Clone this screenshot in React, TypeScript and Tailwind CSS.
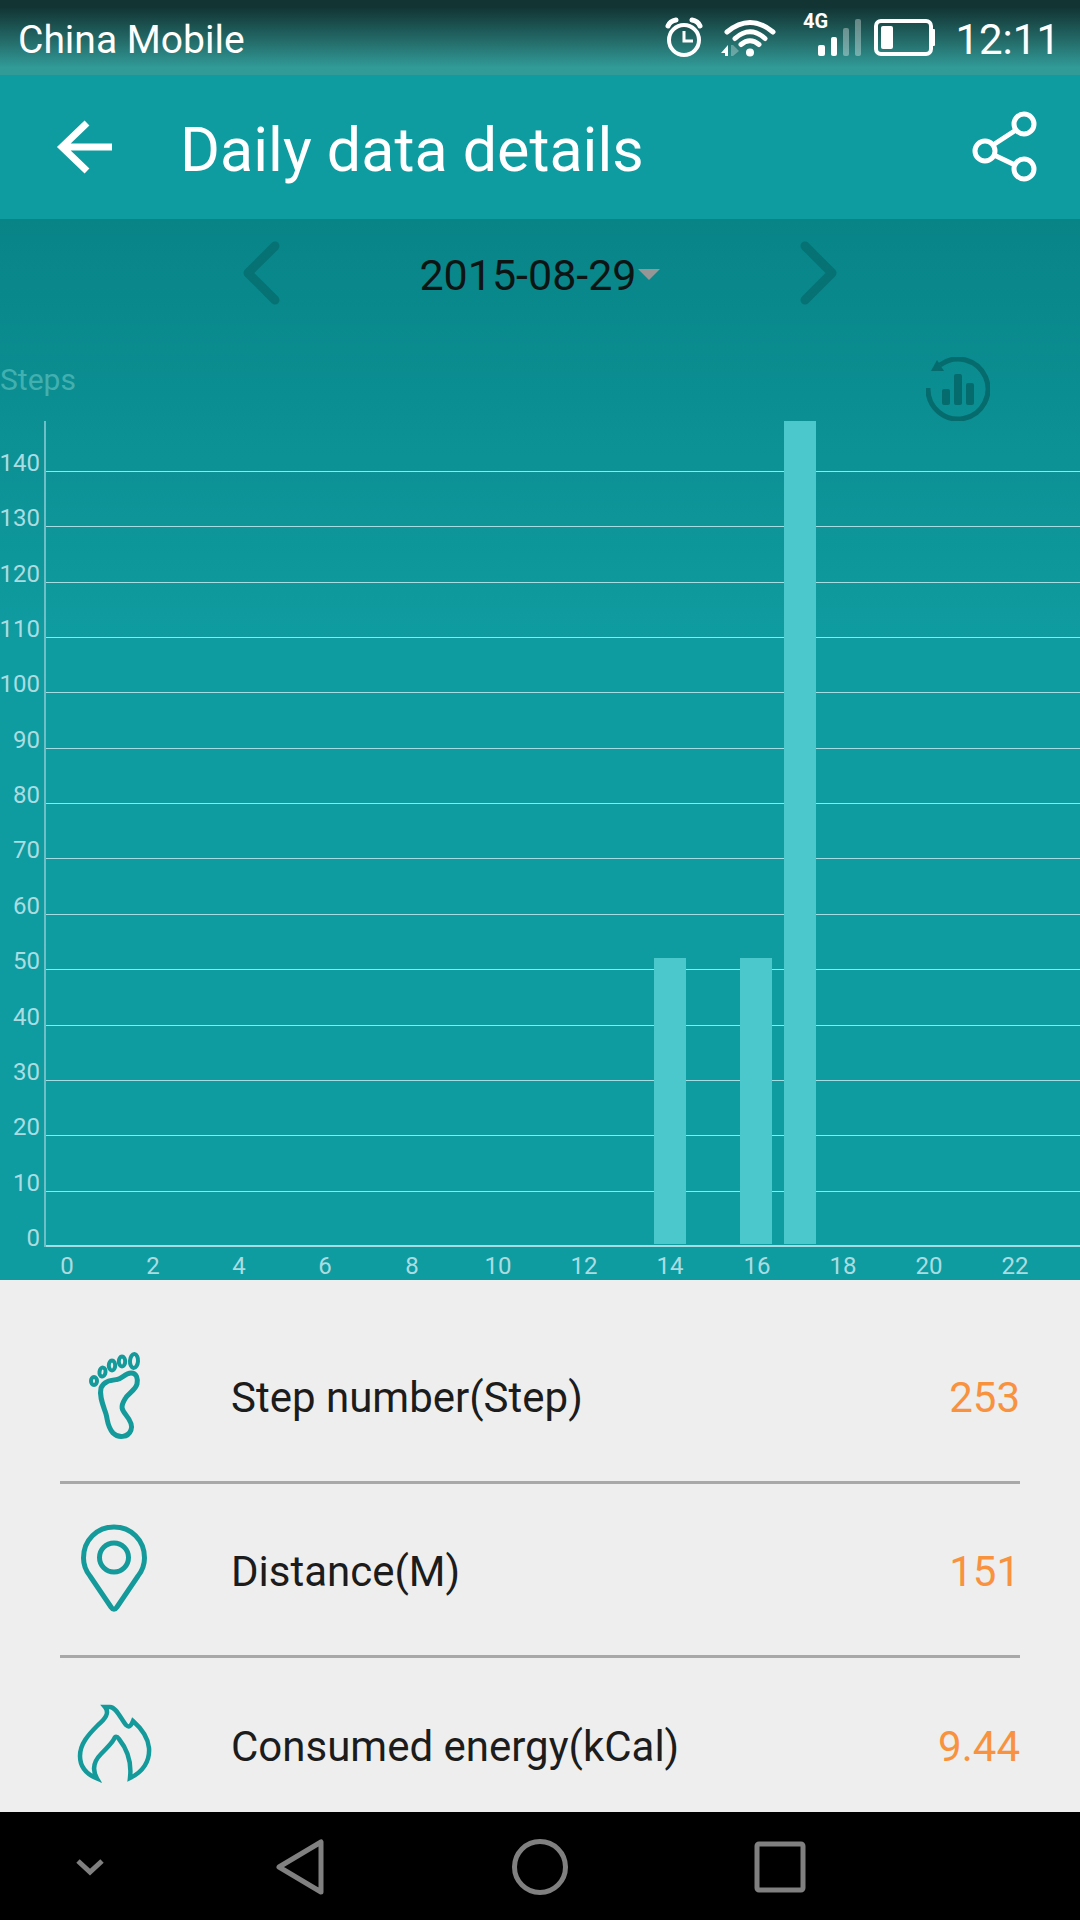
import type { ReactNode } from "react";

const hourlySteps = [
  { hour: 14, steps: 52 },
  { hour: 16, steps: 52 },
  { hour: 17, steps: 149 },
];

const stats = [
  { label: "Step number(Step)", value: "253", icon: <FootIcon /> },
  { label: "Distance(M)", value: "151", icon: <PinIcon /> },
  { label: "Consumed energy(kCal)", value: "9.44", icon: <FlameIcon /> },
];

// Chart geometry, in viewBox units
const CHART_W = 1080;
const CHART_H = 859;
const AXIS_X = 45;
const BASE_Y = 825;
const MAX_STEPS = 149;
const SLOT = (CHART_W - AXIS_X) / 24;

const yOf = (steps: number) => Math.round(BASE_Y - (steps / MAX_STEPS) * BASE_Y);

function FootIcon() {
  return (
    <svg viewBox="0 0 80 100" className="w-20 h-[100px]" fill="none" stroke="#159a9b" strokeWidth="4" aria-hidden="true">
      <ellipse cx="20" cy="35" rx="3" ry="4" />
      <ellipse cx="28.500" cy="26" rx="3" ry="4.500" transform="rotate(8 28 26)" />
      <ellipse cx="38" cy="19.500" rx="3.200" ry="5" />
      <ellipse cx="48" cy="15.500" rx="3.200" ry="5" />
      <ellipse cx="60" cy="15" rx="4" ry="7" transform="rotate(4 60 15)" />
      <path strokeWidth="5" d="M43 33.500C48 33 51 27 57 27C63 27 64 33 63 38C61 45 54 47 51 53C46 61 48 64 52 69C56 74 59 79 57 84C54 92 44 92 39 87C33 80 34 75 32 68C29 59 25 50 27 42C30 35 36 34.500 43 33.500Z" />
    </svg>
  );
}

function PinIcon() {
  return (
    <svg viewBox="0 0 80 100" className="w-20 h-[100px]" fill="none" stroke="#159a9b" strokeWidth="5" aria-hidden="true">
      <path d="M40 7C57 7 70.500 20 70.500 38C70.500 45 68 51 64 56L43 87C41 90 39 90 37 87L16 56C12 51 9.500 45 9.500 38C9.500 20 23 7 40 7Z" />
      <circle cx="40" cy="37.500" r="14.500" />
    </svg>
  );
}

function FlameIcon() {
  return (
    <svg viewBox="0 0 80 100" className="w-20 h-[100px]" fill="none" stroke="#159a9b" strokeWidth="4.500" aria-hidden="true">
      <path d="M31 12C36 18 31 24 24 30C14 40 6 49 6 61C6 71 12 79 23 83.500C17 73 21 65 27 59C33 53 38 48 40 44C41 41 43 41 45 44C53 54 58 66 56 83C69 77 76 66 75 53C74 42 67 33 59 26C57 31 55 33 52 30C47 24 42 12 36 12Z" />
    </svg>
  );
}

function StatusBar() {
  return (
    <div className="flex items-center justify-between h-[75px] pl-[18px] pr-5 pt-1 text-white bg-gradient-to-b from-[#123534] from-10% to-[#319b98] to-90% shrink-0">
      <span className="text-[39px] leading-[64px]">China Mobile</span>
      <div className="flex items-center">
        {/* Alarm */}
        <svg viewBox="0 0 38 46" className="w-[38px] h-[46px]" fill="none" stroke="white" aria-hidden="true">
          <circle cx="19" cy="23" r="15" strokeWidth="4" />
          <path d="M19 14V24H28" strokeWidth="3" />
          <path d="M3 9Q5 4 11 3M35 9Q33 4 27 3" strokeWidth="5" strokeLinecap="round" />
        </svg>
        {/* Wifi */}
        <svg viewBox="0 0 58 46" className="w-[58px] h-[46px] ml-4" fill="none" stroke="white" strokeWidth="5" strokeLinecap="round" aria-hidden="true">
          <path d="M8 15Q31 -4 54 15M16 21.500Q31 8 46 21.500M22 27.500Q31 20 40 27.500" />
          <circle cx="31" cy="35.500" r="4" fill="white" stroke="none" />
          <path d="M9 28V39H6V36H2Z" fill="white" stroke="none" />
          <path d="M12 28V39H14L20 34L14 28Z" fill="white" fillOpacity="0.300" stroke="none" />
        </svg>
        {/* Signal */}
        <svg viewBox="0 0 60 46" className="w-[60px] h-[46px] ml-[26px] overflow-visible" fill="white" aria-hidden="true">
          <text x="0" y="11" fontSize="20" fontWeight="700">4G</text>
          <rect x="15" y="28" width="7" height="11" rx="2" />
          <rect x="28" y="20" width="6" height="19" rx="2" />
          <rect x="40" y="11" width="6" height="28" rx="2" fillOpacity="0.350" />
          <rect x="52" y="2" width="6" height="37" rx="2" fillOpacity="0.350" />
        </svg>
        {/* Battery */}
        <svg viewBox="0 0 62 46" className="w-[62px] h-[46px] ml-[11px]" aria-hidden="true">
          <rect x="2" y="4" width="55" height="33" rx="5" fill="none" stroke="white" strokeWidth="4" />
          <rect x="7" y="9" width="12" height="23" rx="2" fill="white" />
          <rect x="57" y="12" width="4" height="17" rx="1" fill="white" />
        </svg>
        <span className="text-[42px] leading-[64px] ml-[19px]">12:11</span>
      </div>
    </div>
  );
}

function Header() {
  return (
    <header className="flex items-center h-36 pl-[54px] pr-10 bg-[#0f9ca0] text-white shrink-0">
      <button type="button" aria-label="Back">
        <svg viewBox="0 0 60 60" className="w-[60px] h-[60px]" fill="none" stroke="white" strokeWidth="7" aria-hidden="true">
          <path d="M33 6L8 30L33 54M8 30H58" />
        </svg>
      </button>
      <h1 className="flex-1 ml-[66px] text-[61px] leading-[72px] pt-1.5">Daily data details</h1>
      <button type="button" aria-label="Share">
        <svg viewBox="0 0 68 72" className="w-[68px] h-[72px]" fill="none" stroke="white" strokeWidth="5" aria-hidden="true">
          <circle cx="13" cy="40" r="10" />
          <circle cx="52" cy="13" r="10" />
          <circle cx="52" cy="58" r="10" />
          <path d="M21 34L44 19M22 44L43 54" />
        </svg>
      </button>
    </header>
  );
}

function DatePicker() {
  return (
    <div className="flex items-center justify-center h-[108px]">
      <button type="button" aria-label="Previous day">
        <svg viewBox="0 0 40 66" className="w-10 h-[66px]" fill="none" stroke="#067274" strokeWidth="9" strokeLinecap="round" strokeLinejoin="round" aria-hidden="true">
          <path d="M33 6L6 33L33 60" />
        </svg>
      </button>
      <button type="button" className="flex items-center justify-center w-[516px] pt-1 text-[43px] leading-[64px] text-[#0d1414]">
        2015-08-29
        <svg viewBox="0 0 24 14" className="w-6 h-[14px]" aria-hidden="true">
          <path d="M1 1H23L12 12Z" fill="#969696" />
        </svg>
      </button>
      <button type="button" aria-label="Next day">
        <svg viewBox="0 0 40 66" className="w-10 h-[66px]" fill="none" stroke="#067274" strokeWidth="9" strokeLinecap="round" strokeLinejoin="round" aria-hidden="true">
          <path d="M7 6L34 33L7 60" />
        </svg>
      </button>
    </div>
  );
}

function StepsChart() {
  const ticks = Array.from({ length: 15 }, (_, i) => i * 10);
  const hours = Array.from({ length: 12 }, (_, i) => i * 2);

  return (
    <svg viewBox={`0 0 ${CHART_W} ${CHART_H}`} className="block w-full h-auto" role="img" aria-label="Steps per hour">
      {ticks.map((t) => (
        <g key={t}>
          <rect x={AXIS_X} y={t === 0 ? BASE_Y - 1 : yOf(t)} width={CHART_W - AXIS_X} height={t === 0 ? 2 : 1} fill="#a5dde2" />
          <text x="40" y={yOf(t)} fontSize="24" textAnchor="end" fill="#abdce2">
            {t}
          </text>
        </g>
      ))}
      <rect x={AXIS_X - 1} y="0" width="2" height={BASE_Y + 1} fill="#6dbfc8" />
      {hourlySteps.map(({ hour, steps }) => (
        <rect
          key={hour}
          x={Math.round(AXIS_X + SLOT * (hour + 0.125))}
          y={yOf(steps)}
          width="32"
          height={BASE_Y - 2 - yOf(steps)}
          fill="#4bc8cb"
        />
      ))}
      {hours.map((h) => (
        <text key={h} x={Math.round(AXIS_X + SLOT * (h + 0.5))} y="853" fontSize="24" textAnchor="middle" fill="#abdce2">
          {h}
        </text>
      ))}
    </svg>
  );
}

function StatRow({ label, value, icon }: { label: string; value: string; icon: ReactNode }) {
  return (
    <li className="flex items-center h-[174px] pl-[14px] border-b-3 border-[#a8a8a8] last:border-b-0">
      {icon}
      <span className="flex-1 ml-[77px] pt-1 text-[#1c1c1c]">{label}</span>
      <span className="pt-1 text-[#f8923f]">{value}</span>
    </li>
  );
}

function NavBar() {
  return (
    <nav className="grid grid-cols-[3fr_4fr_4fr_4fr_3fr] items-center justify-items-center h-[108px] bg-black shrink-0">
      <button type="button" aria-label="Hide bar">
        <svg viewBox="0 0 30 60" className="w-[30px] h-[60px]" fill="none" stroke="#808080" strokeWidth="5" aria-hidden="true">
          <path d="M3 25L15 36L27 25" />
        </svg>
      </button>
      <button type="button" aria-label="Back">
        <svg viewBox="0 0 60 60" className="w-[60px] h-[60px]" fill="none" stroke="#808080" strokeWidth="5" strokeLinejoin="round" aria-hidden="true">
          <path d="M9 31L51 6V56Z" />
        </svg>
      </button>
      <button type="button" aria-label="Home">
        <svg viewBox="0 0 60 60" className="w-[60px] h-[60px]" fill="none" stroke="#808080" strokeWidth="5" aria-hidden="true">
          <circle cx="30" cy="31" r="25.500" />
        </svg>
      </button>
      <button type="button" aria-label="Recent apps">
        <svg viewBox="0 0 60 60" className="w-[60px] h-[60px]" fill="none" stroke="#808080" strokeWidth="5" aria-hidden="true">
          <rect x="7" y="8" width="46" height="46" rx="2" />
        </svg>
      </button>
    </nav>
  );
}

export default function App() {
  return (
    <div className="flex flex-col h-screen bg-[#eeeeee] font-[Roboto,sans-serif]">
      <StatusBar />
      <Header />

      <main className="flex-1 min-h-0 overflow-y-auto [scrollbar-width:none]">
        <section className="bg-[#0f9ca0] bg-gradient-to-b from-[#088487] to-[#0f9ca0] to-40%">
          <DatePicker />
          <div className="flex items-start justify-between pt-[30px] pr-[90px]">
            <span className="text-[30px] leading-[46px] text-[#43b0b0]">Steps</span>
            <button type="button" aria-label="Reset chart">
              <svg viewBox="0 0 64 64" className="block w-16 h-16" aria-hidden="true">
                <path d="M14 8A30 30 0 1 1 2 31" fill="none" stroke="#066b6d" strokeWidth="5" />
                <path d="M5 14L11 3L18 14Z" fill="#066b6d" />
                <rect x="16" y="32" width="8" height="16" rx="2" fill="#066b6d" />
                <rect x="28" y="17" width="8" height="31" rx="2" fill="#066b6d" />
                <rect x="40" y="26" width="8" height="22" rx="2" fill="#066b6d" />
              </svg>
            </button>
          </div>
          <StepsChart />
        </section>

        <ul className="px-[60px] pt-[30px] text-[42px] leading-[64px]">
          {stats.map((stat) => (
            <StatRow key={stat.label} {...stat} />
          ))}
        </ul>
      </main>

      <NavBar />
    </div>
  );
}
